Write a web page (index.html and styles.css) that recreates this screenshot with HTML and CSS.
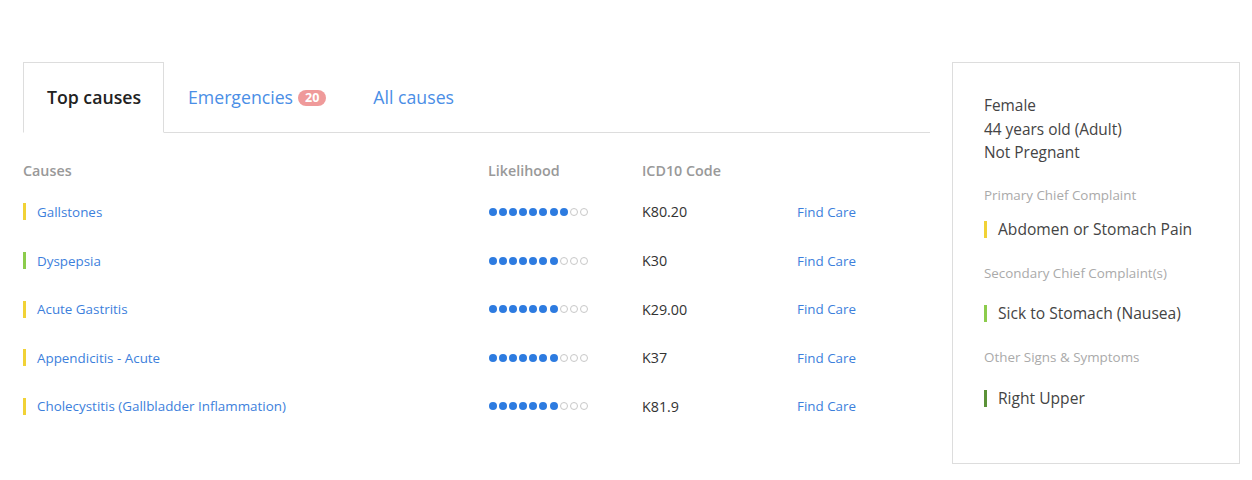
FILE: index.html
```html
<!DOCTYPE html>
<html>
<head>
<meta charset="utf-8">
<link rel="stylesheet" href="styles.css">
</head>
<body>
<div class="page">
  <div class="main">
    <div class="tabs">
      <div class="tab active">Top causes</div>
      <div class="tab">Emergencies <span class="badge">20</span></div>
      <div class="tab">All causes</div>
    </div>
    <div class="table">
      <div class="row head">
        <div class="cell">Causes</div>
        <div class="cell">Likelihood</div>
        <div class="cell">ICD10 Code</div>
        <div class="cell"></div>
      </div>
      <div class="row">
        <div class="cell cause"><span class="bar yellow"></span>Gallstones</div>
        <div class="cell dots"><i class="on"></i><i class="on"></i><i class="on"></i><i class="on"></i><i class="on"></i><i class="on"></i><i class="on"></i><i class="on"></i><i></i><i></i></div>
        <div class="cell code">K80.20</div>
        <div class="cell care">Find Care</div>
      </div>
      <div class="row">
        <div class="cell cause"><span class="bar green"></span>Dyspepsia</div>
        <div class="cell dots"><i class="on"></i><i class="on"></i><i class="on"></i><i class="on"></i><i class="on"></i><i class="on"></i><i class="on"></i><i></i><i></i><i></i></div>
        <div class="cell code">K30</div>
        <div class="cell care">Find Care</div>
      </div>
      <div class="row">
        <div class="cell cause"><span class="bar yellow"></span>Acute Gastritis</div>
        <div class="cell dots"><i class="on"></i><i class="on"></i><i class="on"></i><i class="on"></i><i class="on"></i><i class="on"></i><i class="on"></i><i></i><i></i><i></i></div>
        <div class="cell code">K29.00</div>
        <div class="cell care">Find Care</div>
      </div>
      <div class="row">
        <div class="cell cause"><span class="bar yellow"></span>Appendicitis - Acute</div>
        <div class="cell dots"><i class="on"></i><i class="on"></i><i class="on"></i><i class="on"></i><i class="on"></i><i class="on"></i><i class="on"></i><i></i><i></i><i></i></div>
        <div class="cell code">K37</div>
        <div class="cell care">Find Care</div>
      </div>
      <div class="row">
        <div class="cell cause"><span class="bar yellow"></span>Cholecystitis (Gallbladder Inflammation)</div>
        <div class="cell dots"><i class="on"></i><i class="on"></i><i class="on"></i><i class="on"></i><i class="on"></i><i class="on"></i><i class="on"></i><i></i><i></i><i></i></div>
        <div class="cell code">K81.9</div>
        <div class="cell care">Find Care</div>
      </div>
    </div>
  </div>
  <div class="panel">
    <div class="info">
      <div>Female</div>
      <div>44 years old (Adult)</div>
      <div>Not Pregnant</div>
    </div>
    <div class="label">Primary Chief Complaint</div>
    <div class="item first"><span class="bar yellow"></span>Abdomen or Stomach Pain</div>
    <div class="label">Secondary Chief Complaint(s)</div>
    <div class="item"><span class="bar green"></span>Sick to Stomach (Nausea)</div>
    <div class="label">Other Signs &amp; Symptoms</div>
    <div class="item"><span class="bar dark"></span>Right Upper</div>
  </div>
</div>
</body>
</html>
```
FILE: styles.css
```css
* { box-sizing: border-box; }
body {
  margin: 0;
  background: #fff;
  font-family: "Open Sans", "Liberation Sans", sans-serif;
  color: #333;
}
.page {
  display: flex;
  align-items: flex-start;
  padding: 62px 0 0 23px;
  gap: 22px;
}
.main { width: 907px; }
.tabs {
  display: flex;
  height: 71px;
  border-bottom: 1px solid #ddd;
}
.tab {
  display: flex;
  align-items: center;
  padding: 0 23px 2px 24px;
  font-size: 17.7px;
  color: #4a8ee6;
  margin-bottom: -1px;
}
.tab.active {
  width: 141px;
  justify-content: center;
  padding: 0 0 2px 1px;
  color: #222;
  font-weight: 600;
  border: 1px solid #ddd;
  border-bottom: 1px solid #fff;
}
.badge {
  display: inline-block;
  margin-left: 5px;
  background: #ef9a9a;
  color: #fff;
  font-size: 12.5px;
  font-weight: 700;
  line-height: 16px;
  height: 16px;
  padding: 0 7px;
  border-radius: 8px;
  margin-top: 2px;
}
.table { padding-top: 26px; }
.row {
  display: grid;
  grid-template-columns: 465px 154px 155px auto;
  align-items: center;
  height: 48.6px;
}
.row.head {
  height: 22px;
  margin-bottom: 6.7px;
  font-size: 14.3px;
  font-weight: 600;
  color: #999;
}
.cell { display: flex; align-items: center; }
.cause { font-size: 13.4px; color: #3d7fdc; }
.bar {
  display: inline-block;
  width: 3px;
  height: 17px;
  margin-right: 11px;
  flex: none;
}
.bar.yellow { background: #f1d236; }
.bar.green { background: #8ccc4c; }
.bar.dark { background: #5b9238; }
.dots { gap: 2.1px; padding-left: 1px; }
.dots i {
  display: block;
  width: 8px;
  height: 8px;
  border-radius: 50%;
  background: #2d7be0;
}
.dots i:not(.on) {
  background: #fff;
  border: 1px solid #c8c8c8;
}
.code { font-size: 14.3px; color: #333; }
.care { font-size: 13.4px; color: #3d7fdc; }
.panel {
  width: 288px;
  height: 402px;
  border: 1.5px solid #ddd;
  padding: 31px 0 0 31px;
}
.info {
  font-size: 15.4px;
  line-height: 23.5px;
  color: #444;
}
.label {
  font-size: 13.4px;
  line-height: 18px;
  color: #aaa;
  margin-top: 24px;
}
.info + .label { margin-top: 21px; }
.item {
  display: flex;
  align-items: center;
  font-size: 15.6px;
  line-height: 21px;
  color: #444;
  margin-top: 21.8px;
}
.item.first { margin-top: 15px; }
```
